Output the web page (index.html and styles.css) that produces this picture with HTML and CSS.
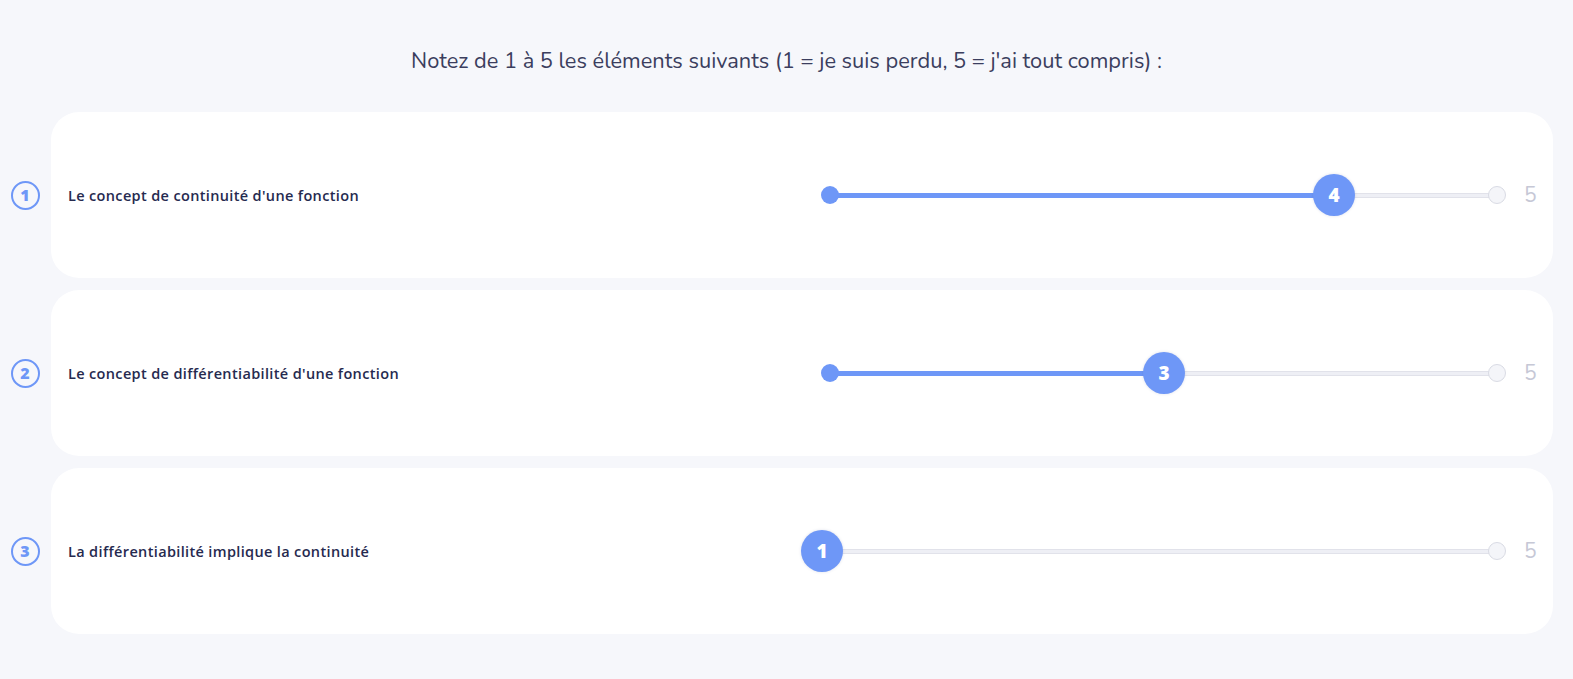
FILE: index.html
```html
<!DOCTYPE html>
<html lang="fr">
<head>
<meta charset="utf-8">
<link rel="stylesheet" href="styles.css">
</head>
<body>
<div class="page">
  <h1 class="title">Notez de 1 à 5 les éléments suivants (1 = je suis perdu, 5 = j'ai tout compris) :</h1>
  <div class="list">
    <div class="row">
      <div class="num-col"><span class="num">1</span></div>
      <div class="card">
        <div class="label">Le concept de continuité d'une fonction</div>
        <div class="slider">
          <div class="track"></div>
          <div class="fill" style="width: 505px"></div>
          <span class="dot start"></span>
          <span class="dot end"></span>
          <span class="thumb" style="left: 513px">4</span>
        </div>
        <div class="max">5</div>
      </div>
    </div>
    <div class="row">
      <div class="num-col"><span class="num">2</span></div>
      <div class="card">
        <div class="label">Le concept de différentiabilité d'une fonction</div>
        <div class="slider">
          <div class="track"></div>
          <div class="fill" style="width: 335px"></div>
          <span class="dot start"></span>
          <span class="dot end"></span>
          <span class="thumb" style="left: 343px">3</span>
        </div>
        <div class="max">5</div>
      </div>
    </div>
    <div class="row">
      <div class="num-col"><span class="num">3</span></div>
      <div class="card">
        <div class="label">La différentiabilité implique la continuité</div>
        <div class="slider">
          <div class="track"></div>
          <span class="dot end"></span>
          <span class="thumb" style="left: 1px">1</span>
        </div>
        <div class="max">5</div>
      </div>
    </div>
  </div>
</div>
</body>
</html>
```
FILE: styles.css
```css
* { box-sizing: border-box; }
html, body { margin: 0; padding: 0; }
body {
  background: #f6f7fb;
  font-family: "Nunito", "Lato", "Open Sans", sans-serif;
  color: #262a4f;
}
.page { padding-top: 47px; }
.title {
  margin: 0 0 37px 0;
  text-align: center;
  font-weight: 400;
  font-size: 21.8px;
  line-height: 28px;
  color: #3b3e5e;
}
.list {
  display: flex;
  flex-direction: column;
  gap: 12px;
  padding-right: 20px;
}
.row {
  display: flex;
  align-items: stretch;
}
.num-col {
  width: 51px;
  display: flex;
  align-items: center;
  justify-content: center;
}
.num {
  width: 29px;
  height: 29px;
  border: 2px solid #6e97f7;
  border-radius: 50%;
  color: #6e97f7;
  font-family: "Open Sans", sans-serif;
  font-weight: 800;
  font-size: 16px;
  display: flex;
  align-items: center;
  justify-content: center;
  margin-right: 1px;
}
.card {
  flex: 1;
  height: 166px;
  background: #ffffff;
  border-radius: 28px;
  display: flex;
  align-items: center;
  padding: 0 17px;
}
.label {
  flex: 1;
  font-family: "Open Sans", sans-serif;
  font-weight: 600;
  font-size: 14.5px;
  letter-spacing: 0.35px;
  color: #262a4f;
}
.slider {
  position: relative;
  width: 685px;
  height: 44px;
}
.track {
  position: absolute;
  left: 8px;
  right: 8px;
  top: 20px;
  height: 5px;
  background: #eeeff5;
  border-top: 1px solid #e1e2ea;
  border-bottom: 1px solid #e1e2ea;
}
.fill {
  position: absolute;
  left: 9px;
  top: 19.5px;
  height: 5px;
  background: #6e97f7;
}
.dot {
  position: absolute;
  top: 13px;
  width: 18px;
  height: 18px;
  border-radius: 50%;
}
.dot.start { left: 0; background: #6e97f7; }
.dot.end {
  right: 0;
  background: #f4f5f9;
  border: 1px solid #d9dbe4;
}
.thumb {
  position: absolute;
  top: 1px;
  width: 42px;
  height: 42px;
  margin-left: -21px;
  border-radius: 50%;
  background: #6e97f7;
  color: #ffffff;
  font-family: "Open Sans", sans-serif;
  font-weight: 800;
  font-size: 19px;
  display: flex;
  align-items: center;
  justify-content: center;
  box-shadow: 0 0 3px rgba(60, 80, 140, 0.18);
}
.max {
  margin-left: 18px;
  width: 12px;
  font-size: 21px;
  color: #c6c8d6;
  line-height: 1;
}
```
